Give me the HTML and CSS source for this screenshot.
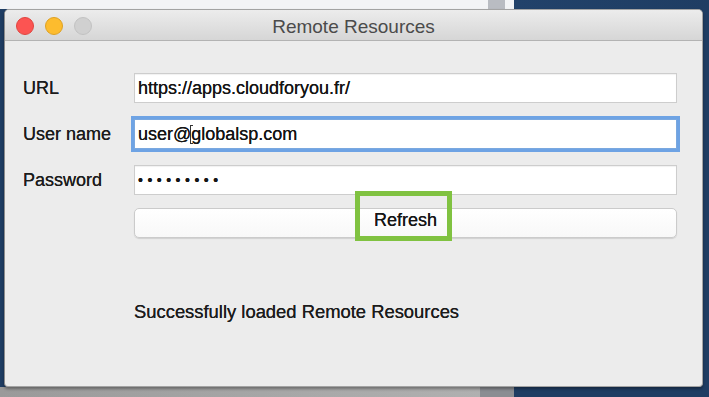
FILE: index.html
```html
<!DOCTYPE html>
<html>
<head>
<meta charset="utf-8">
<link rel="stylesheet" href="styles.css">
</head>
<body>
<div class="desktop">
  <div class="window">
    <div class="titlebar">
      <div class="lights">
        <span class="light red"></span>
        <span class="light yellow"></span>
        <span class="light gray"></span>
      </div>
      <div class="title">Remote Resources</div>
    </div>
    <div class="content">
      <div class="form">
        <label class="label">URL</label>
        <input class="field" type="text" value="https://apps.cloudforyou.fr/" readonly>
        <label class="label">User name</label>
        <div class="field-wrap">
          <input class="field focused" type="text" value="user@globalsp.com" readonly>
          <span class="ibeam"></span>
        </div>
        <label class="label">Password</label>
        <input class="field password" type="password" value="123456789" readonly>
        <span></span>
        <div class="button-wrap">
          <button class="button">Refresh</button>
          <span class="highlight"></span>
        </div>
        <span></span>
        <div class="status">Successfully loaded Remote Resources</div>
      </div>
    </div>
  </div>
</div>
</body>
</html>
```

FILE: styles.css
```css
* { box-sizing: border-box; }
html, body { margin: 0; padding: 0; }
body {
  width: 709px;
  height: 397px;
  overflow: hidden;
  font-family: "Liberation Sans", Arial, sans-serif;
}
.desktop {
  width: 709px;
  height: 397px;
  padding: 9px 6px 10px 4px;
  background:
    linear-gradient(to right, #f3f4f6 0, #f3f4f6 488px, #b9bcc2 488px, #b9bcc2 505px, #f3f4f6 505px, #f3f4f6 514px, #22426a 514px, #1f3d63 100%) top / 100% 9px no-repeat,
    linear-gradient(to right, #9a9a9a 0, #b0b0b0 480px, #8a8d92 480px, #8a8d92 514px, #1f3d63 514px, #1f3d63 100%) bottom / 100% 10px no-repeat,
    #1f3d63;
}
.window {
  width: 699px;
  height: 378px;
  background: #ececec;
  border: 1px solid #a3a3a3;
  border-left-color: #8c8c8c;
  border-radius: 5px 5px 4px 4px;
  box-shadow: 0 2px 3px rgba(0,0,0,0.35);
  display: flex;
  flex-direction: column;
  overflow: hidden;
}
.titlebar {
  height: 31px;
  flex: none;
  display: flex;
  align-items: center;
  position: relative;
  background: linear-gradient(#ececec, #d6d6d6);
  border-bottom: 1px solid #b3b3b3;
  padding: 2px 0 0 11px;
}
.lights {
  display: flex;
  gap: 11px;
}
.light {
  width: 18px;
  height: 18px;
  border-radius: 50%;
  display: block;
}
.red { background: #fc5452; border: 1px solid #e0443e; }
.yellow { background: #fdbc2e; border: 1px solid #dea123; }
.gray { background: #d0d0d0; border: 1px solid #c2c2c2; }
.title {
  position: absolute;
  left: 0;
  right: 0;
  top: 6px;
  text-align: center;
  font-size: 19px;
  color: #4b4b4b;
}
.content {
  flex: 1;
  padding: 32px 25px 0 18px;
}
.form {
  display: grid;
  grid-template-columns: 111px 543px;
  row-gap: 16px;
  align-items: center;
}
.label {
  font-size: 18px;
  color: #1c1c1c;
  text-shadow: 0 0 0.4px #1c1c1c;
}
.field-wrap { position: relative; }
.field {
  display: block;
  width: 543px;
  height: 30px;
  margin: 0;
  padding: 0 3px;
  border: 1px solid #cdcdcd;
  background: #fff;
  font-family: "Liberation Sans", Arial, sans-serif;
  font-size: 18px;
  color: #151515;
  outline: none;
  box-shadow: inset 0 1px 1px rgba(0,0,0,0.06);
  text-shadow: 0 0 0.4px #151515;
}
.field.focused {
  border-color: #7aa8df;
  box-shadow: 0 0 0 3px #6ea3e4;
}
.field.password {
  font-size: 14px;
  letter-spacing: 4.5px;
  padding-left: 3px;
}
.ibeam {
  position: absolute;
  left: 56px;
  top: 6px;
  height: 19px;
  width: 3px;
  border-left: 1px solid #333;
  border-top: 1px solid #333;
  border-bottom: 1px solid #333;
}
.button-wrap {
  position: relative;
  margin-top: -3px;
}
.button {
  display: block;
  width: 543px;
  height: 30px;
  margin: 0;
  border: 1px solid #cbcbcb;
  border-radius: 5px;
  background: linear-gradient(#ffffff, #f8f8f8);
  box-shadow: 0 1px 1px rgba(0,0,0,0.12);
  font-family: "Liberation Sans", Arial, sans-serif;
  font-size: 18px;
  color: #161616;
  padding: 0 0 5px;
  text-shadow: 0 0 0.5px #161616;
}
.highlight {
  position: absolute;
  left: 221px;
  top: -17px;
  width: 97px;
  height: 50px;
  border: 5px solid #80c241;
}
.status {
  margin-top: 47px;
  font-size: 18.4px;
  color: #1c1c1c;
  text-shadow: 0 0 0.4px #1c1c1c;
}
```
